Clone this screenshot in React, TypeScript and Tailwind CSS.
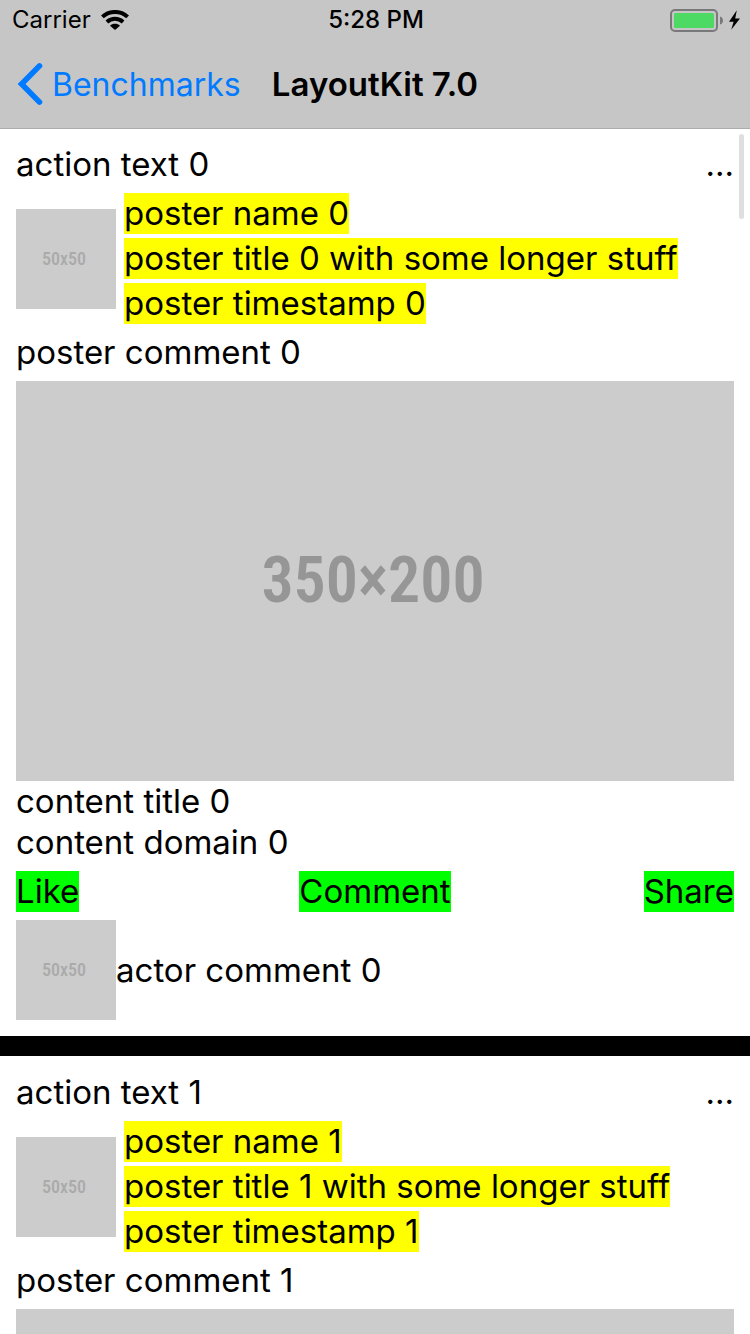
function WifiIcon() {
  return (
    <svg width="28" height="20" viewBox="0 0 28 20" aria-hidden="true">
      <path d="M1.4 6.9C8.4 0.3 19.6 0.3 26.6 6.9" fill="none" stroke="#000" strokeWidth="4" />
      <path d="M5.9 11.9C10.6 7.7 17.4 7.7 22.1 11.9" fill="none" stroke="#000" strokeWidth="4" />
      <path d="M9 15.8C11.6 13.2 16.4 13.2 19 15.8L14 20Z" fill="#000" />
    </svg>
  );
}

function BatteryIcon() {
  return (
    <svg width="70" height="24" viewBox="0 0 70 24" role="img" aria-label="Battery charging">
      <rect x="1" y="2" width="46" height="21" rx="4" fill="none" stroke="#79797b" strokeWidth="2" />
      <rect x="4" y="5" width="40" height="15" rx="1.5" fill="#4cd964" />
      <path d="M50 8.5C54 9.3 54 15.7 50 16.5Z" fill="#79797b" />
      <path d="M66.8 2.2L59 13.8H63.6L61.2 21.8L70 10.6H65.2Z" fill="#000" />
    </svg>
  );
}

function BackIcon() {
  return (
    <svg width="28" height="44" viewBox="0 0 28 44" aria-hidden="true">
      <path
        d="M23.5 3.9L5.6 22L23.5 40.1"
        fill="none"
        stroke="#007aff"
        strokeWidth="5.6"
        strokeLinecap="round"
        strokeLinejoin="miter"
      />
    </svg>
  );
}

function Thumbnail() {
  return (
    <div className="flex size-[100px] shrink-0 items-center justify-center bg-[#ccc] pr-1 font-['Roboto_Condensed','Liberation_Sans',sans-serif] text-lg font-medium text-[#aaa]">
      50x50
    </div>
  );
}

function Post({ index }: { index: number }) {
  return (
    <article className="flex shrink-0 flex-col gap-2 bg-white p-4">
      <div className="flex justify-between">
        <p>action text {index}</p>
        <button type="button" aria-label="More options">...</button>
      </div>
      <div className="flex items-center gap-2">
        <Thumbnail />
        <div className="flex flex-col items-start gap-1">
          <p className="bg-[#ff0]">poster name {index}</p>
          <p className="bg-[#ff0]">poster title {index} with some longer stuff</p>
          <p className="bg-[#ff0]">poster timestamp {index}</p>
        </div>
      </div>
      <p>poster comment {index}</p>
      <div>
        <div className="flex h-[400px] items-center justify-center bg-[#ccc] pr-1 font-['Roboto_Condensed','Liberation_Sans',sans-serif] text-[64px] leading-none font-semibold text-[#969696]">
          350×200
        </div>
        <p>content title {index}</p>
        <p>content domain {index}</p>
      </div>
      <div className="grid grid-cols-3">
        <button type="button" className="justify-self-start bg-[#0f0]">Like</button>
        <button type="button" className="justify-self-center bg-[#0f0]">Comment</button>
        <button type="button" className="justify-self-end bg-[#0f0]">Share</button>
      </div>
      <div className="flex items-center">
        <Thumbnail />
        <p>actor comment {index}</p>
      </div>
    </article>
  );
}

export default function App() {
  return (
    <div className="flex h-screen flex-col overflow-hidden bg-white font-[Inter,sans-serif] text-[33px] leading-[41px] text-black">
      <header className="relative z-10 -mb-px border-b border-[#acacac] bg-[#c6c6c6]">
        <div className="grid h-10 grid-cols-3 items-center pr-2.5 pl-3 text-2xl">
          <div className="flex items-center gap-2.5">
            <span>Carrier</span>
            <WifiIcon />
          </div>
          <span className="text-center font-medium">5:28 PM</span>
          <div className="flex justify-end">
            <BatteryIcon />
          </div>
        </div>
        <nav className="grid h-[88px] grid-cols-[1fr_auto_1fr] items-center px-4">
          <a href="#benchmarks" className="flex items-center gap-2 text-[32px] text-[#007aff]">
            <BackIcon />
            Benchmarks
          </a>
          <h1 className="font-semibold">LayoutKit 7.0</h1>
        </nav>
      </header>
      <main className="relative min-h-0 flex-1">
        <div className="flex h-full flex-col gap-5 overflow-y-auto bg-black [scrollbar-width:none]">
          <Post index={0} />
          <Post index={1} />
        </div>
        <div className="absolute top-1.5 right-1.5 h-[85px] w-[5px] rounded-full bg-[#dfdfdf]" />
      </main>
    </div>
  );
}
